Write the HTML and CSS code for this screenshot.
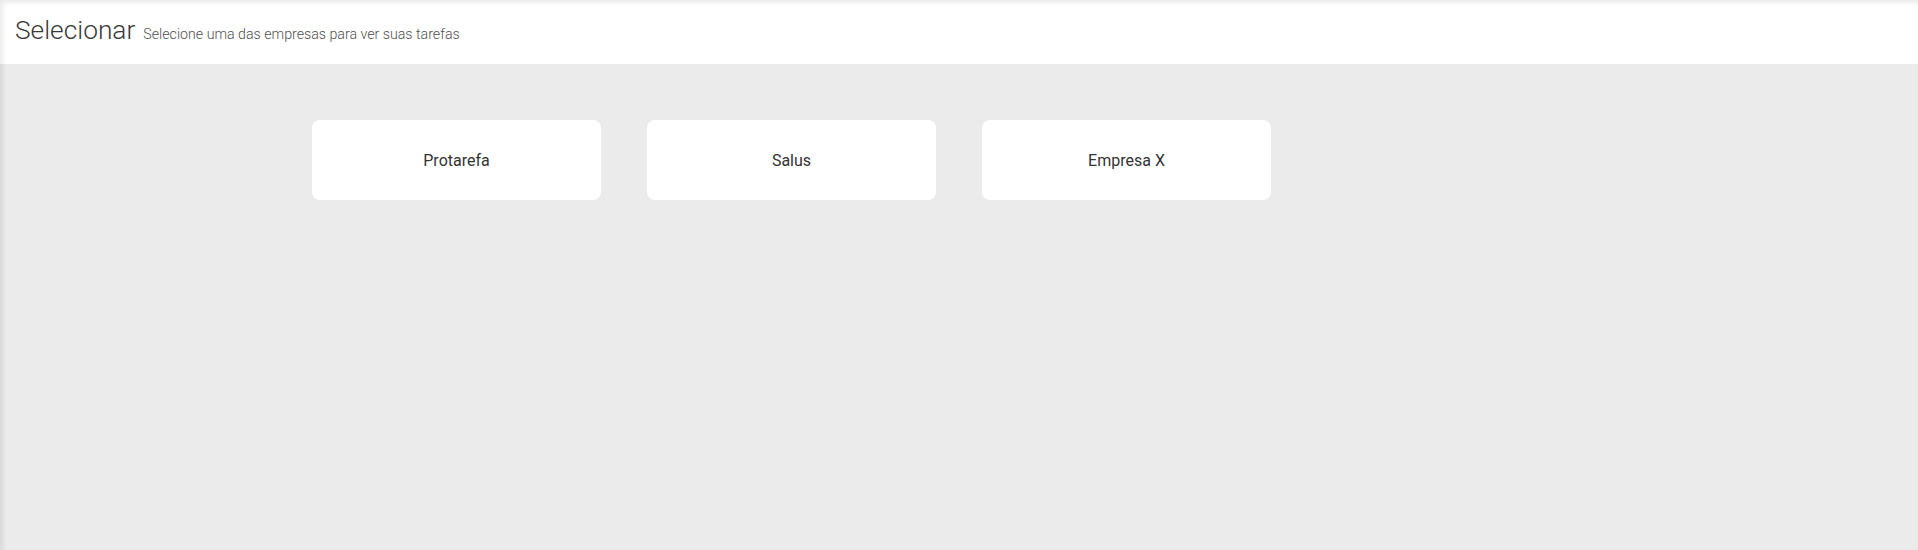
FILE: index.html
```html
<!DOCTYPE html>
<html lang="pt-BR">
<head>
<meta charset="utf-8">
<title>Selecionar</title>
<link rel="stylesheet" href="styles.css">
</head>
<body>
<div class="app">
  <header class="page-header">
    <h1 class="page-title">Selecionar</h1>
    <span class="page-subtitle">Selecione uma das empresas para ver suas tarefas</span>
  </header>
  <main class="content">
    <div class="company-grid">
      <div class="company-card">Protarefa</div>
      <div class="company-card">Salus</div>
      <div class="company-card">Empresa X</div>
    </div>
  </main>
</div>
</body>
</html>
```

FILE: styles.css
```css
html, body {
  margin: 0;
  padding: 0;
  height: 100%;
}

body {
  font-family: Roboto, "Liberation Sans", sans-serif;
  background: #ebebeb;
  color: #333;
}

.app {
  position: relative;
  min-height: 100%;
  background: #ebebeb;
}

.app::after {
  content: "";
  position: absolute;
  inset: 0;
  pointer-events: none;
  box-shadow: inset 3px 3px 4px rgba(0, 0, 0, 0.08);
}

.page-header {
  background: #fff;
  height: 64px;
  box-sizing: border-box;
  padding: 13px 15px 0;
  display: flex;
  align-items: baseline;
  gap: 8px;
}

.page-title {
  margin: 0;
  font-weight: 300;
  font-size: 26.3px;
  line-height: 34px;
  color: #3a3a3a;
}

.page-subtitle {
  font-weight: 300;
  font-size: 14.2px;
  color: #505050;
}

.content {
  padding-top: 56px;
}

.company-grid {
  width: 1294px;
  margin: 0 auto;
  display: grid;
  grid-template-columns: repeat(4, 289px);
  column-gap: 46px;
}

.company-card {
  background: #fff;
  border-radius: 8px;
  height: 80px;
  display: flex;
  align-items: center;
  justify-content: center;
  font-size: 16px;
  font-weight: 400;
  color: #333;
}
```
